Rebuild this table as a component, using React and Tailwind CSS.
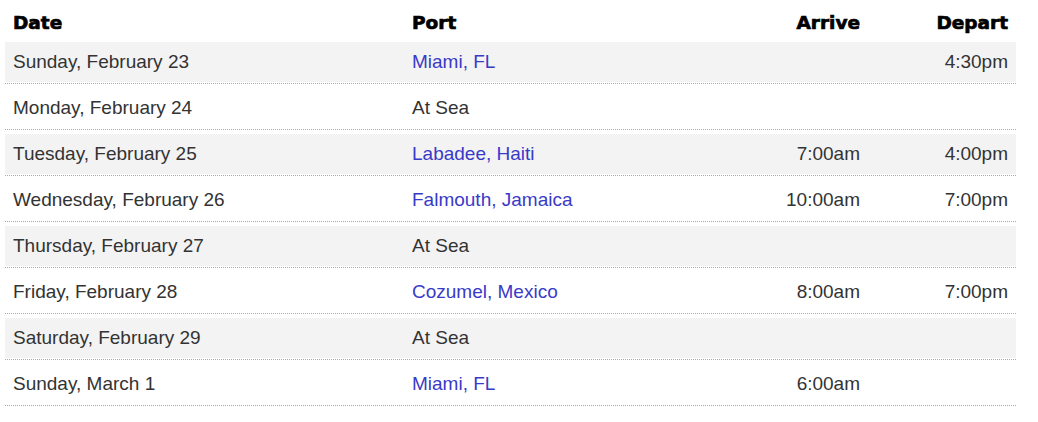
import React from "react";

const rows = [
  { date: "Sunday, February 23", port: "Miami, FL", link: true, arrive: "", depart: "4:30pm" },
  { date: "Monday, February 24", port: "At Sea", link: false, arrive: "", depart: "" },
  { date: "Tuesday, February 25", port: "Labadee, Haiti", link: true, arrive: "7:00am", depart: "4:00pm" },
  { date: "Wednesday, February 26", port: "Falmouth, Jamaica", link: true, arrive: "10:00am", depart: "7:00pm" },
  { date: "Thursday, February 27", port: "At Sea", link: false, arrive: "", depart: "" },
  { date: "Friday, February 28", port: "Cozumel, Mexico", link: true, arrive: "8:00am", depart: "7:00pm" },
  { date: "Saturday, February 29", port: "At Sea", link: false, arrive: "", depart: "" },
  { date: "Sunday, March 1", port: "Miami, FL", link: true, arrive: "6:00am", depart: "" },
];

export default function App() {
  return (
    <div className="w-[1038px] h-[422px] bg-white overflow-hidden">
      <div className="ml-[5px] w-[1011px] flex flex-col">
        <div
          className="h-[38px] pt-[8px] grid grid-cols-[399px_1fr_160px_148px] items-center text-[18.5px] font-bold text-black [-webkit-text-stroke:0.7px_#000]"
          style={{ fontFamily: '"DejaVu Sans", sans-serif' }}
        >
          <div className="px-[8px]">Date</div>
          <div className="px-[8px]">Port</div>
          <div className="px-[8px] text-right">Arrive</div>
          <div className="px-[8px] text-right">Depart</div>
        </div>
        {rows.map((r, i) => (
          <div key={i} className="mt-[4px] pb-[1px] border-b border-dotted border-[#aaaaaa]">
            <div
              className={
                "h-[40px] grid grid-cols-[399px_1fr_160px_148px] items-center text-[19px] text-[#333333] " +
                (i % 2 === 0 ? "bg-[#f3f3f3]" : "bg-white")
              }
              style={{ fontFamily: '"Liberation Sans", Arial, sans-serif' }}
            >
              <div className="px-[8px]">{r.date}</div>
              <div className={"px-[8px] " + (r.link ? "text-[#3a3ac8]" : "")}>{r.port}</div>
              <div className="px-[8px] text-right">{r.arrive}</div>
              <div className="px-[8px] text-right">{r.depart}</div>
            </div>
          </div>
        ))}
      </div>
    </div>
  );
}
